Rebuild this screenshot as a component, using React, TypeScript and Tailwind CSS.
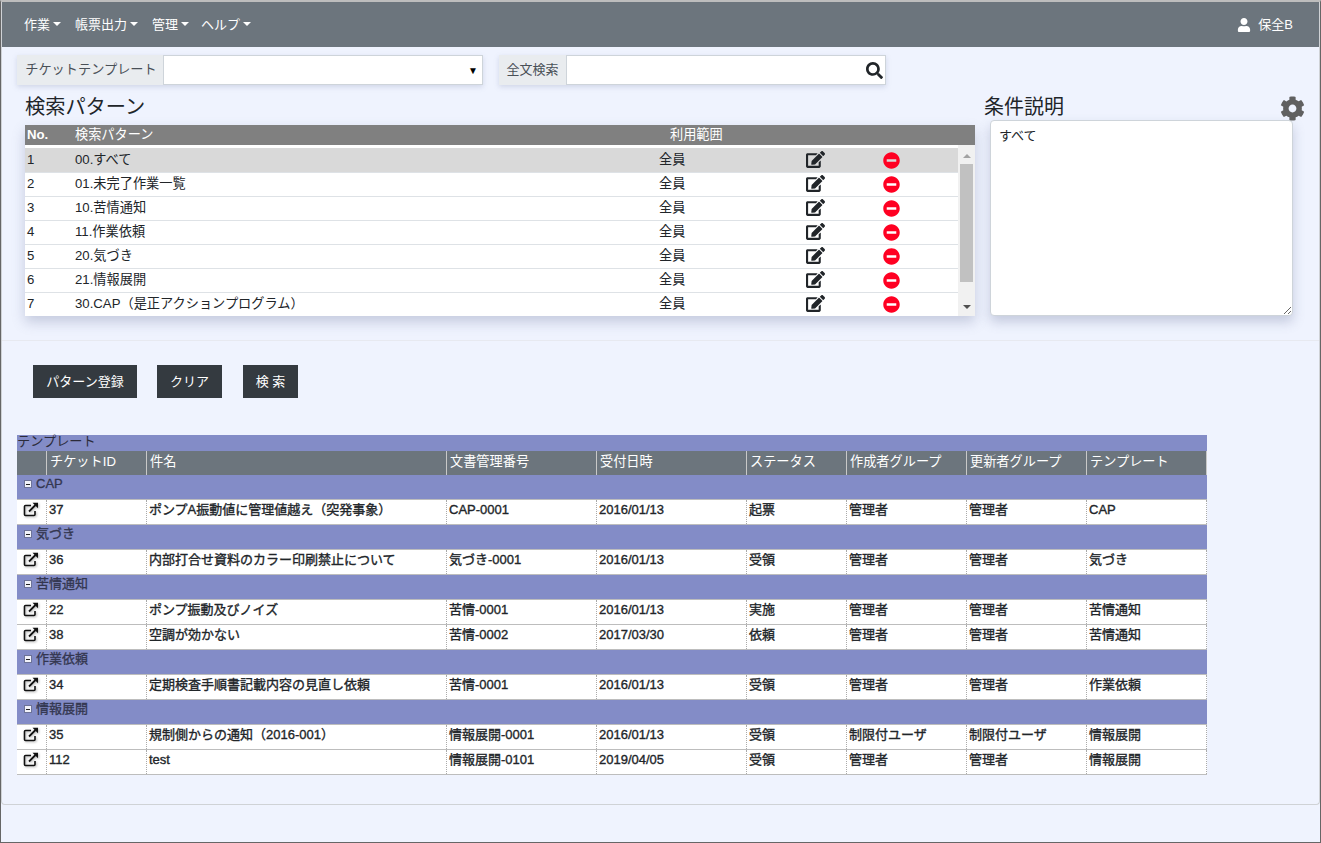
import { FaEdit, FaMinusCircle, FaSearch, FaUser, FaCog } from 'react-icons/fa';

const font = { fontFamily: '"Liberation Sans", "Noto Sans CJK JP", sans-serif' };

const patterns = [
  '00.すべて',
  '01.未完了作業一覧',
  '10.苦情通知',
  '11.作業依頼',
  '20.気づき',
  '21.情報展開',
  '30.CAP（是正アクションプログラム）',
];

const columns = ['チケットID', '件名', '文書管理番号', '受付日時', 'ステータス', '作成者グループ', '更新者グループ', 'テンプレート'];
const colWidths = ['w-[100px]', 'w-[300px]', 'w-[150px]', 'w-[150px]', 'w-[100px]', 'w-[120px]', 'w-[120px]', 'w-[120px]'];

const groups = [
  { name: 'CAP', rows: [['37', 'ポンプA振動値に管理値越え（突発事象）', 'CAP-0001', '2016/01/13', '起票', '管理者', '管理者', 'CAP']] },
  { name: '気づき', rows: [['36', '内部打合せ資料のカラー印刷禁止について', '気づき-0001', '2016/01/13', '受領', '管理者', '管理者', '気づき']] },
  {
    name: '苦情通知',
    rows: [
      ['22', 'ポンプ振動及びノイズ', '苦情-0001', '2016/01/13', '実施', '管理者', '管理者', '苦情通知'],
      ['38', '空調が効かない', '苦情-0002', '2017/03/30', '依頼', '管理者', '管理者', '苦情通知'],
    ],
  },
  { name: '作業依頼', rows: [['34', '定期検査手順書記載内容の見直し依頼', '苦情-0001', '2016/01/13', '受領', '管理者', '管理者', '作業依頼']] },
  {
    name: '情報展開',
    rows: [
      ['35', '規制側からの通知（2016-001）', '情報展開-0001', '2016/01/13', '受領', '制限付ユーザ', '制限付ユーザ', '情報展開'],
      ['112', 'test', '情報展開-0101', '2019/04/05', '受領', '管理者', '管理者', '情報展開'],
    ],
  },
];

function Caret() {
  return <span className="ml-[3px] inline-block h-0 w-0 border-x-[4px] border-t-[4px] border-x-transparent border-t-white align-[3px]" />;
}

function NavItem({ label, className = '' }: { label: string; className?: string }) {
  return (
    <a className={`whitespace-nowrap text-[13px] text-white ${className}`}>
      {label}
      <Caret />
    </a>
  );
}

function OpenIcon() {
  return (
    <svg width="16" height="15" viewBox="0 0 16 15" fill="none" className="drop-shadow-[1px_1px_1px_rgba(0,0,0,0.3)]">
      <path d="M8 3.5H2.5A1 1 0 0 0 1.5 4.5v8a1 1 0 0 0 1 1H11a1 1 0 0 0 1-1V9" stroke="#111" strokeWidth="1.6" />
      <path d="M6 9.5 12.5 3" stroke="#111" strokeWidth="1.8" />
      <path d="M9.5 0.8H15V6.3Z" fill="#111" />
    </svg>
  );
}

export default function App() {
  return (
    <div style={font} className="h-[843px] w-full overflow-hidden border-t-2 border-l border-r border-b border-t-[#bdbdbd] border-l-[#666] border-r-[#666] border-b-[#666] bg-[#eff3fe] text-[#212529]">
      <div className="h-[803px] rounded-b border-b border-r border-l border-[#cfd2d6]">
        <nav className="flex h-[45px] items-center justify-between bg-[#6c757d] pl-[22px] pr-[26px]">
          <div className="flex gap-[14px]">
            <NavItem label="作業" />
            <NavItem label="帳票出力" />
            <NavItem label="管理" />
            <NavItem label="ヘルプ" className="-ml-[2px]" />
          </div>
          <div className="flex items-center gap-[7px] text-[13px] text-white">
            <FaUser className="text-[14px]" />
            <span>保全B</span>
          </div>
        </nav>

        <div className="flex gap-[16px] pl-[15px] pt-[8px]">
          <div className="flex h-[30px] w-[466px] shadow-[0_2px_5px_rgba(120,130,170,0.25)]">
            <span className="flex w-[146px] items-center justify-center bg-[#e9ecef] pl-[2px] text-[13.2px] text-[#495057]">チケットテンプレート</span>
            <div className="flex flex-1 items-center justify-end border border-[#ced4da] bg-white pr-[4px] text-[10px] text-black">▼</div>
          </div>
          <div className="flex h-[30px] w-[387px] shadow-[0_2px_5px_rgba(120,130,170,0.25)]">
            <span className="flex w-[67px] items-center justify-center bg-[#e9ecef] text-[13px] text-[#495057]">全文検索</span>
            <div className="flex flex-1 items-center justify-end border border-[#ced4da] bg-white pr-[2px] text-[17px] text-[#212529]">
              <FaSearch />
            </div>
          </div>
        </div>

        <div className="flex">
          <div className="ml-[23px] w-[950px]">
            <h2 className="mt-[8px] h-[32px] text-[20.2px] leading-[28px]">検索パターン</h2>
            <div className="shadow-[0_6px_12px_rgba(100,110,150,0.3)]">
              <div className="flex h-[20px] items-center bg-[#808080] text-[13.2px] font-bold text-white">
                <span className="w-[50px] pl-[2px]">No.</span>
                <span className="w-[595px] font-normal">検索パターン</span>
                <span className="font-normal">利用範囲</span>
              </div>
              <div className="flex h-[171px] bg-white">
                <div className="flex-1 pt-[3px]">
                  {patterns.map((p, i) => (
                    <div key={p} className={`flex h-[24px] items-center border-t pb-[2px] text-[13.2px] ${i === 0 ? 'border-[#d9d9d9] bg-[#d9d9d9]' : 'border-[#dee2e6]'}`}>
                      <span className="w-[50px] pl-[2px]">{i + 1}</span>
                      <span className="w-[584px]">{p}</span>
                      <span className="w-[147px]">全員</span>
                      <span className="w-[77px]"><FaEdit className="text-[19px]" /></span>
                      <FaMinusCircle className="mt-[2px] text-[17px] text-[#ff0022]" />
                    </div>
                  ))}
                </div>
                <div className="flex w-[17px] flex-col items-center bg-[#f1f1f1]">
                  <span className="mt-[9px] h-0 w-0 border-x-[4px] border-b-[4px] border-x-transparent border-b-[#a3a3a3]" />
                  <span className="mt-[6px] h-[118px] w-[13px] bg-[#c1c1c1]" />
                  <span className="mt-[23px] h-0 w-0 border-x-[4px] border-t-[4px] border-x-transparent border-t-[#505050]" />
                </div>
              </div>
            </div>
          </div>

          <div className="relative ml-[9px] w-[316px]">
            <h2 className="mt-[8px] h-[27px] text-[20px] leading-[28px]">条件説明</h2>
            <FaCog className="absolute right-[-5px] top-[11px] text-[25px] text-[#606060]" />
            <textarea
              readOnly
              defaultValue="すべて"
              className="ml-[6px] block h-[196px] w-[303px] rounded border border-[#ced4da] bg-white px-[8px] py-[5px] text-[13px] shadow-[0_6px_12px_rgba(100,110,150,0.3)]"
            />
          </div>
        </div>

        <hr className="mt-[24px] border-[#e7e9f0]" />

        <div className="flex pl-[31px] pt-[24px]">
          <button className="mr-[20px] h-[33px] w-[104px] bg-[#343a40] text-[13px] text-white">パターン登録</button>
          <button className="mr-[21px] h-[33px] w-[65px] bg-[#343a40] text-[13px] text-white">クリア</button>
          <button className="h-[33px] w-[55px] bg-[#343a40] text-[13px] text-white">検 索</button>
        </div>

        <div className="ml-[15px] mt-[37px] w-[1190px]">
          <div className="h-[16px] bg-[#838cc7] text-[13.2px] leading-[14px] text-[#2b2b3a]">テンプレート</div>
          <div className="flex h-[24px] bg-[#6c757d] text-[13.2px] text-white">
            <div className="w-[30px] border-r border-[#c8c8c8]" />
            {columns.map((c, i) => (
              <div key={c} className={`${colWidths[i]} flex items-center border-r border-[#c8c8c8] pl-[3px] pb-[2px]`}>{c}</div>
            ))}
          </div>
          {groups.map((g) => (
            <div key={g.name}>
              <div className="flex h-[25px] items-start gap-[4px] border-b border-[#bdbdbd] bg-[#838cc7] pl-[7px] text-[13px] leading-[18px] text-[#33364f] [-webkit-text-stroke:0.3px]">
                <span className="mt-[5px] flex h-[8px] w-[8px] items-center justify-center border border-[#6d7398] bg-[#f2f3fa]">
                  <span className="h-px w-[4px] bg-[#222]" />
                </span>
                {g.name}
              </div>
              {g.rows.map((r) => (
                <div key={r[0]} className="flex h-[25px] border-b border-[#bdbdbd] bg-white text-[13px] text-[#212529] [-webkit-text-stroke:0.35px]">
                  <div className="flex w-[30px] items-center justify-center border-r border-dotted border-[#aaa] pb-[6px] pr-[1px]"><OpenIcon /></div>
                  {r.map((v, i) => (
                    <div key={i} className={`${colWidths[i]} border-r border-dotted border-[#aaa] pl-[2px] leading-[20px]`}>{v}</div>
                  ))}
                </div>
              ))}
            </div>
          ))}
        </div>
      </div>
    </div>
  );
}
